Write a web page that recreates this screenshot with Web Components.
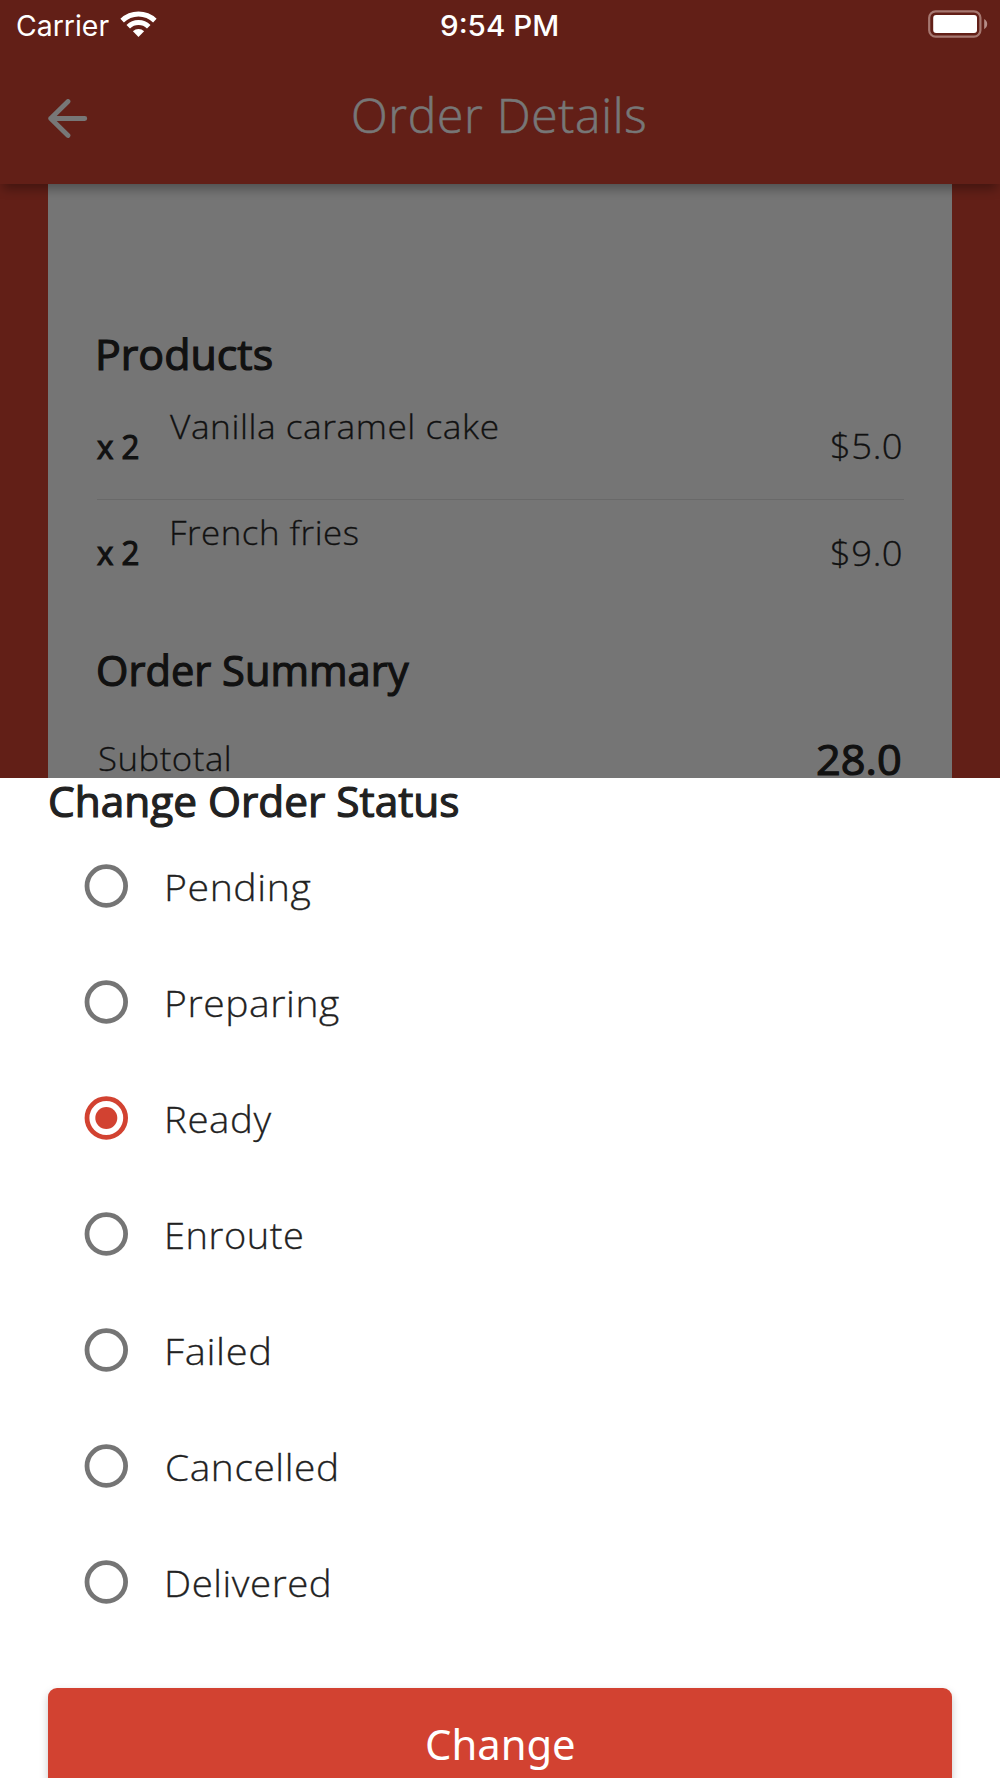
<!DOCTYPE html>
<html lang="en">
<head>
<meta charset="utf-8">
<title>Order Details</title>
<style>
html,body{margin:0;height:1778px;overflow:hidden;background:#fff}
body{font-family:"Open Sans",sans-serif}
</style>
</head>
<body>
<order-screen></order-screen>
<script>
const define = (name, html, ready) => customElements.define(name, class extends HTMLElement {
  connectedCallback() {
    if (this.shadowRoot) return;
    this.attachShadow({mode: 'open'}).innerHTML = html;
    if (ready) ready.call(this, this.shadowRoot);
  }
});

const pen = document.createElement('canvas').getContext('2d');

/* One line of text whose box spans its capital height; letters are widened to the span given. */
define('tracked-text', `<style>
:host{display:block;flex:none;white-space:pre;height:.714em;line-height:.652;-webkit-text-stroke:.3px currentColor}
:host([strong]){-webkit-text-stroke:1.2px currentColor}
:host([face]){-webkit-text-stroke:0}
:host([face="ui"]){font-family:Inter,sans-serif;height:.727em;line-height:.726}
:host([face="round"]){font-family:"Noto Sans",sans-serif}
span{display:block;width:max-content;transform-origin:0 0}
</style><span><slot></slot></span>`, function (root) {
  const strong = this.hasAttribute('strong');
  const size = +this.getAttribute('size'), weight = strong ? 400 : +this.getAttribute('weight') || 300;
  this.style.fontSize = size + 'px';
  this.style.fontWeight = weight;
  const span = +this.getAttribute('span'), text = this.textContent;
  pen.font = weight + ' ' + size + 'px ' + getComputedStyle(this).fontFamily;
  const m = pen.measureText(text);
  const edge = strong ? 0.6 : 0;
  const gap = weight < 400 ? size * 0.015 : 0;
  const ink = m.actualBoundingBoxLeft + m.actualBoundingBoxRight + gap * (text.length - 1);
  const scale = (span - 2 * edge) / ink;
  this.style.width = span + 'px';
  const line = root.querySelector('span');
  line.style.letterSpacing = gap.toFixed(3) + 'px';
  line.style.marginLeft = (m.actualBoundingBoxLeft * scale + edge).toFixed(2) + 'px';
  line.style.transform = 'scaleX(' + scale.toFixed(4) + ')';
});

define('status-bar', `<style>
:host{display:grid;grid-template-columns:1fr auto 1fr;height:48px;box-sizing:border-box;padding:10px 15.5px 0 13.5px;color:#fff}
div{display:flex;align-items:flex-start}
.l{gap:11.5px;margin-left:3.5px}.r{justify-content:flex-end;margin-right:-3px}
tracked-text{margin-top:6px}
svg{display:block}
</style>
<div class="l"><tracked-text face="ui" size="28" weight="400" span="91.5">Carrier</tracked-text>
<svg width="37" height="27" viewBox="0 0 37 27" fill="#fff"><path d="M.4 8.8A25.8 25.8 0 0 1 36.6 8.8L33.1 12.4A20.8 20.8 0 0 0 3.9 12.4Z"/><path d="M6.5 14.9A17.2 17.2 0 0 1 30.5 14.9L27 18.4A12.2 12.2 0 0 0 10 18.4Z"/><path d="M12.9 21.2A8.1 8.1 0 0 1 24.1 21.2L18.5 27Z"/></svg></div>
<tracked-text face="ui" size="28" weight="550" span="116.5">9:54 PM</tracked-text>
<div class="r"><svg width="60" height="28" viewBox="0 0 60 28"><rect x="1.2" y="1.3" width="51.2" height="25.4" rx="6.5" fill="none" stroke="#a67871" stroke-width="2.2"/><rect x="5.2" y="5" width="43.8" height="18" rx="3" fill="#fff"/><path d="M56.2 9c4 2.2 4 8 0 10.2z" fill="#b58d87"/></svg></div>`);

define('app-bar', `<style>
:host{display:grid;grid-template-columns:1fr auto 1fr;align-items:start;height:136px;box-sizing:border-box;padding:51px 49px 0 47px;color:#777}
svg{display:block;margin-left:1px}
tracked-text{margin-top:1px;-webkit-text-stroke-width:.6px}
</style>
<svg width="40" height="40" viewBox="0 0 40 40" fill="none" stroke="#777" stroke-width="4.8" stroke-linecap="round" stroke-linejoin="round"><path d="M20 2.5 2.7 19.5 20 36.5M2.7 19.5H36.8"/></svg>
<tracked-text size="47.5" span="291.5">Order Details</tracked-text><span></span>`);

define('product-row', `<style>
:host{display:flex;align-items:flex-start;height:106.2px;box-sizing:border-box;border-bottom:1.5px solid transparent}
:host([ruled]){border-color:#696969}
.q{margin-top:42px}.n{margin:22.5px 0 0 30.5px}.p{margin:41.5px 2.5px 0 auto}
:host([inset]) .n{margin-left:33px;margin-top:22px}
</style><tracked-text class="q" size="33.5" strong span="42.5">x 2</tracked-text>`, function (root) {
  const add = (cls, key, size, span) => {
    const el = document.createElement('tracked-text');
    el.className = cls;
    el.setAttribute('size', size);
    el.setAttribute('span', span);
    el.textContent = this.getAttribute(key);
    root.append(el);
  };
  add('n', 'name', 32.5, this.getAttribute('name-span'));
  add('p', 'price', 34, 69);
});

define('order-card', `<style>
:host{display:block;box-sizing:border-box;height:594px;margin:0 48px;padding:156px 48.5px 0;background:#757575;color:#111;overflow:hidden}
.h{margin-left:2.2px}
.items{margin-top:23.5px}
.o{margin:50px 0 0 1px}
.sum{display:flex;justify-content:space-between;align-items:flex-start;padding:58px 2.5px 0 2.5px}
.s{margin-top:3.5px}
</style>
<tracked-text class="h" size="42.5" strong span="174">Products</tracked-text>
<div class="items"><product-row ruled name="Vanilla caramel cake" name-span="327" price="$5.0"></product-row>
<product-row inset name="French fries" name-span="185.5" price="$9.0"></product-row></div>
<tracked-text class="o" size="42.5" strong span="312.5">Order Summary</tracked-text>
<div class="sum"><tracked-text class="s" size="33.5" span="130">Subtotal</tracked-text><tracked-text size="42.5" strong span="83.5">28.0</tracked-text></div>`);

define('radio-option', `<style>
:host{display:flex;height:116px;gap:39px;color:#212121}
svg{display:block;flex:none}
.t{padding-top:11px}
circle{stroke:#757575}
.dot{display:none}
:host([checked]) circle{stroke:#d24231}
:host([checked]) .dot{display:block;fill:#d24231;stroke:none}
</style><svg width="44" height="44" viewBox="0 0 44 44"><circle cx="22.3" cy="22" r="19.3" fill="none" stroke-width="4.8"/><circle class="dot" cx="22.3" cy="22" r="11"/></svg><div class="t"></div>`, function (root) {
  const el = document.createElement('tracked-text');
  el.setAttribute('size', 36.8);
  el.setAttribute('span', this.getAttribute('span'));
  el.textContent = this.getAttribute('label');
  root.querySelector('.t').append(el);
});

define('status-sheet', `<style>
:host{display:block;box-sizing:border-box;height:1000px;background:#fff;color:#212121;padding:8.7px 48px 0;overflow:hidden}
h2{margin:0 0 0 1.5px}
.list{box-sizing:border-box;padding:47px 0 0 36px;height:871.3px}
button{all:unset;display:flex;justify-content:center;box-sizing:border-box;width:100%;height:116px;padding-top:41.5px;border-radius:9px;background:#d24231;color:#fff;box-shadow:0 4px 8px rgba(0,0,0,.22)}
</style>
<h2><tracked-text size="42.5" strong span="409.5">Change Order Status</tracked-text></h2>
<div class="list">
<radio-option label="Pending" span="143.5"></radio-option>
<radio-option label="Preparing" span="172"></radio-option>
<radio-option checked label="Ready" span="104"></radio-option>
<radio-option label="Enroute" span="135.5"></radio-option>
<radio-option label="Failed" span="101.5"></radio-option>
<radio-option label="Cancelled" span="169"></radio-option>
<radio-option label="Delivered" span="161.5"></radio-option>
</div>
<button><tracked-text face="round" size="42" weight="400" span="147">Change</tracked-text></button>`);

define('order-screen', `<style>
:host{display:flex;flex-direction:column;width:1000px;height:1778px;overflow:hidden;background:#621f17}
header{position:relative;background:#621f17;box-shadow:0 8px 10px -3px rgba(0,0,0,.32)}
header,order-card,status-sheet{flex:none}
status-sheet{position:relative}
</style><header><status-bar></status-bar><app-bar></app-bar></header><order-card></order-card><status-sheet></status-sheet>`);
</script>
</body>
</html>
